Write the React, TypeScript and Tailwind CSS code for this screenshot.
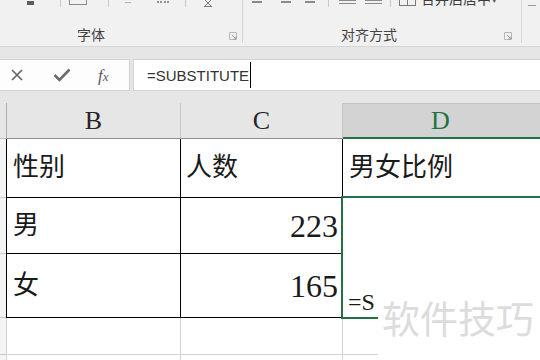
import React from "react";

const serif = "font-['Liberation_Serif','Noto_Sans_CJK_SC',serif]";

function Launcher() {
  return (
    <svg width="8" height="8" viewBox="0 0 8 8" className="shrink-0">
      <path d="M0.5 0.5 H7.5 V7.5 H0.5 Z" fill="none" stroke="#b8b8b8" strokeWidth="1" />
      <path d="M3 3 L7 7 M7 4.5 V7 H4.5" fill="none" stroke="#9a9a9a" strokeWidth="1" />
    </svg>
  );
}

function Ribbon() {
  return (
    <div className="h-[47px] bg-[#f1f1f1] border-b border-[#d6d6d6] flex overflow-hidden">
      {/* 字体 group */}
      <div className="w-[243px] shrink-0 border-r border-[#d5d5d5] mb-[3px] flex flex-col">
        <div className="h-[8px] flex items-start">
          <div className="ml-[27px] w-[7px] h-[4px] bg-[#5c5c5c] mt-[1px]" />
          <div className="ml-[26px] w-px h-[7px] bg-[#c9c9c9]" />
          <div className="ml-[8px] w-[18px] h-[5px] border-b border-x border-[#8a8a8a]" />
          <div className="ml-[21px] w-px h-[7px] bg-[#c9c9c9]" />
          <div className="ml-[16px] w-[6px] h-[3px] border-b border-[#b0b0b0]" />
          <div className="ml-[26px] w-[12px] h-[3px] border-b-2 border-dotted border-[#909090]" />
          <div className="ml-[16px] w-px h-[7px] bg-[#c9c9c9]" />
          <svg width="10" height="7" viewBox="0 0 10 7" className="ml-[17px]">
            <path d="M2 0 L8 6 M8 0 L2 6 M1 6.5 H9" stroke="#7a7a7a" strokeWidth="1" fill="none" />
          </svg>
        </div>
        <div className="flex-1 flex items-end pb-[2px]">
          <span className="ml-[77px] text-[14px] text-[#444] font-['Noto_Sans_CJK_SC',sans-serif] leading-none">
            字体
          </span>
          <span className="ml-[124px] mb-[1px]">
            <Launcher />
          </span>
        </div>
      </div>
      {/* 对齐方式 group */}
      <div className="w-[279px] shrink-0 border-r border-[#d5d5d5] mb-[3px] flex flex-col">
        <div className="h-[8px] flex items-start">
          <div className="ml-[9px] w-[10px] h-[2px] bg-[#8a8a8a] mt-[1px]" />
          <div className="ml-[19px] w-[10px] h-[2px] bg-[#8a8a8a] mt-[1px]" />
          <div className="ml-[14px] w-[10px] h-[2px] bg-[#8a8a8a] mt-[1px]" />
          <div className="ml-[13px] w-px h-[7px] bg-[#c9c9c9]" />
          <div className="ml-[10px] w-[17px] h-[4px] border-y border-[#8a8a8a]" />
          <div className="ml-[9px] w-[17px] h-[4px] border-y border-[#8a8a8a]" />
          <div className="ml-[8px] w-px h-[7px] bg-[#c9c9c9]" />
          <div className="ml-[8px] w-[17px] h-[6px] border border-t-0 border-[#7a7a7a] flex">
            <div className="w-1/2 border-r border-[#7a7a7a]" />
          </div>
          <span className="ml-[5px] -mt-[9px] text-[14px] leading-none text-[#3c3c3c] font-['Noto_Sans_CJK_SC',sans-serif]">
            合并后居中
          </span>
          <span className="ml-[1px] -mt-[5px] text-[9px] leading-none text-[#555]">▾</span>
        </div>
        <div className="flex-1 flex items-end pb-[2px]">
          <span className="ml-[98px] text-[14px] text-[#444] font-['Noto_Sans_CJK_SC',sans-serif] leading-none">
            对齐方式
          </span>
          <span className="ml-[107px] mb-[1px]">
            <Launcher />
          </span>
        </div>
      </div>
      <div className="flex-1 flex">
        <div className="ml-[6px] mt-[1px] w-[8px] h-[5px] border-b border-[#999]" />
      </div>
    </div>
  );
}

function FormulaBar() {
  return (
    <div className="bg-[#e6e6e6] pt-[12px] pb-[12px]">
      <div className="h-[32px] flex gap-[3px]">
        <div className="w-[130px] shrink-0 bg-[#fdfdfd] border border-l-0 border-[#d2d2d2] flex items-center">
          <svg width="12" height="12" viewBox="0 0 12 12" className="ml-[11px]">
            <path d="M1 1 L11 11 M11 1 L1 11" stroke="#666" strokeWidth="1.7" />
          </svg>
          <svg width="18" height="14" viewBox="0 0 18 14" className="ml-[30px]">
            <path d="M1.5 7 L6.5 12 L16.5 1.5" fill="none" stroke="#6b6b6b" strokeWidth="2.6" />
          </svg>
          <span className="ml-[27px] text-[17px] italic text-[#5a5a5a] font-['Liberation_Serif',serif] leading-none">
            f<span className="text-[13px]">x</span>
          </span>
        </div>
        <div className="flex-1 bg-white border border-r-0 border-[#d2d2d2] flex items-center">
          <span className="ml-[13px] text-[15px] text-[#333] font-['Liberation_Sans',sans-serif] leading-none">
            =SUBSTITUTE
          </span>
          <span className="ml-[1px] w-px h-[26px] bg-black" />
        </div>
      </div>
    </div>
  );
}

function Sheet() {
  const cjk = `${serif} text-[26px] text-[#1a1a1a] leading-none`;
  const num = `${serif} text-[32px] text-[#1a1a1a] leading-none`;
  return (
    <div className="relative">
      <div className="grid grid-cols-[6px_175px_162px_1fr] grid-rows-[36px_59px_56px_64px_37px_20px]">
        {/* header row */}
        <div className="bg-[#e6e6e6] border-b border-[#bdbdbd]" />
        <div className="bg-[#e6e6e6] border-l border-r border-b border-l-[#b0b0b0] border-r-[#c6c6c6] border-b-[#8f8f8f] flex items-center justify-center">
          <span className={`${serif} text-[26px] text-[#262626] leading-none`}>B</span>
        </div>
        <div className="bg-[#e6e6e6] border-r border-b border-r-[#c6c6c6] border-b-[#8f8f8f] flex items-center justify-center">
          <span className={`${serif} text-[26px] text-[#262626] leading-none`}>C</span>
        </div>
        <div className="bg-[#d3d3d3] border-t border-t-[#c3c3c3] border-b-2 border-b-[#217346] flex items-center justify-center">
          <span className={`${serif} text-[26px] text-[#217346] leading-none mr-[2px]`}>D</span>
        </div>

        {/* row 1 */}
        <div className="bg-[#f4f4f4] border-b border-[#c8c8c8]" />
        <div className="border-l border-r border-b border-black flex items-center pl-[6px]">
          <span className={cjk}>性别</span>
        </div>
        <div className="border-r border-b border-black flex items-center pl-[5px]">
          <span className={cjk}>人数</span>
        </div>
        <div className="border-b border-black flex items-center pl-[6px]">
          <span className={cjk}>男女比例</span>
        </div>

        {/* row 2 */}
        <div className="bg-[#f4f4f4] border-b border-[#c8c8c8]" />
        <div className="border-l border-r border-b border-black flex items-center pl-[6px]">
          <span className={cjk}>男</span>
        </div>
        <div className="border-r border-b border-black flex items-center justify-end pr-[4px]">
          <span className={num}>223</span>
        </div>
        <div />

        {/* row 3 */}
        <div className="bg-[#f4f4f4] border-b border-[#c8c8c8]" />
        <div className="border-l border-r border-b border-black flex items-center pl-[6px]">
          <span className={cjk}>女</span>
        </div>
        <div className="border-r border-b border-black flex items-center justify-end pr-[4px]">
          <span className={num}>165</span>
        </div>
        <div className="flex items-end pl-[5px] pb-[4px]">
          <span className={`${serif} text-[24px] text-[#1a1a1a] leading-none`}>=S</span>
        </div>

        {/* row 4 */}
        <div className="bg-[#f4f4f4] border-b border-[#c8c8c8]" />
        <div className="border-l border-r border-b border-[#d4d4d4]" />
        <div className="border-r border-b border-[#d4d4d4]" />
        <div className="border-b border-[#d4d4d4]" />

        {/* row 5 */}
        <div className="bg-[#f4f4f4]" />
        <div className="border-l border-r border-[#d4d4d4]" />
        <div className="border-r border-[#d4d4d4]" />
        <div />
      </div>

      {/* selection box D2:D3 */}
      <div className="absolute left-[341px] top-[93px] w-[260px] h-[123px] border-2 border-[#217346]" />

      {/* watermark */}
      <div className="absolute left-[378px] top-[188px] right-0 bottom-0 bg-white flex items-start">
        <span className="ml-[4px] mt-[7px] text-[38px] leading-none text-[#dcdcdc] font-['Noto_Sans_CJK_SC',sans-serif]">
          软件技巧
        </span>
      </div>
    </div>
  );
}

export default function App() {
  return (
    <div className="w-[540px] h-[360px] overflow-hidden bg-white">
      <Ribbon />
      <FormulaBar />
      <Sheet />
    </div>
  );
}
